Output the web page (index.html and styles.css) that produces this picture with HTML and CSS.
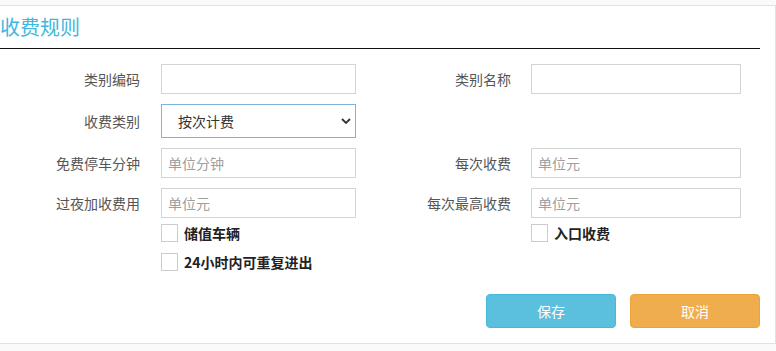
FILE: index.html
```html
<!DOCTYPE html>
<html lang="zh-CN">

<head>
  <meta charset="UTF-8" />
  <meta name="viewport" content="width=device-width, initial-scale=1.0" />
  <title>收费规则</title>
  <link rel="stylesheet" href="styles.css">
</head>

<body>
  <div class="panel">
    <div class="panel-heading">
      <h3 class="panel-title">收费规则</h3>
    </div>

    <form class="rule-form">
      <div class="form-grid">
        <label class="field-label" for="typeCode">类别编码</label>
        <input class="field-input" id="typeCode" type="text" />
        <label class="field-label" for="typeName">类别名称</label>
        <input class="field-input" id="typeName" type="text" />

        <label class="field-label" for="feeType">收费类别</label>
        <select class="field-select" id="feeType">
          <option>按次计费</option>
          <option>按时计费</option>
        </select>
        <span></span>
        <span></span>

        <label class="field-label" for="freeMinutes">免费停车分钟</label>
        <input class="field-input" id="freeMinutes" type="text" placeholder="单位分钟" />
        <label class="field-label" for="perFee">每次收费</label>
        <input class="field-input" id="perFee" type="text" placeholder="单位元" />

        <label class="field-label" for="nightFee">过夜加收费用</label>
        <input class="field-input" id="nightFee" type="text" placeholder="单位元" />
        <label class="field-label" for="maxFee">每次最高收费</label>
        <input class="field-input" id="maxFee" type="text" placeholder="单位元" />

        <span></span>
        <label class="check"><input type="checkbox" /> 储值车辆</label>
        <span></span>
        <label class="check"><input type="checkbox" /> 入口收费</label>

        <span></span>
        <label class="check check-last"><input type="checkbox" /> 24小时内可重复进出</label>
        <span></span>
        <span></span>
      </div>

      <div class="form-actions">
        <button type="button" class="btn btn-info">保存</button>
        <button type="button" class="btn btn-warning">取消</button>
      </div>
    </form>
  </div>
</body>

</html>
```

FILE: styles.css
```css
:root {
  --info: #5bc0de;
  --info-border: #46b8da;
  --warning: #f0ad4e;
  --warning-border: #eea236;
  --border: #d4d4d4;
  --label: #555;
}

body {
  margin: 0;
  font-family: "Microsoft YaHei", "Noto Sans CJK SC", "Noto Sans", sans-serif;
  font-size: 14px;
  color: #333;
  background-color: #fafafa;
}

.panel {
  margin-top: 5px;
  width: 775px;
  background: #fff;
  border: 1px solid #e2e2e2;
  border-left: none;
}

.panel-heading {
  margin-right: 15px;
  border-bottom: 1px solid #111;
}

.panel-title {
  margin: 0;
  height: 42px;
  line-height: 42px;
  font-size: 20px;
  font-weight: normal;
  color: #3fb7dd;
}

.rule-form {
  padding: 15px 0 15px;
}

.form-grid {
  display: grid;
  grid-template-columns: 161px 195px 175px 210px;
  row-gap: 10px;
  align-items: center;
}

.field-label {
  padding-right: 21px;
  text-align: right;
  color: var(--label);
}

.form-grid .field-label:nth-child(4n+3) {
  padding-right: 20px;
}

.field-input {
  box-sizing: border-box;
  height: 30px;
  width: 100%;
  margin: 0;
  padding: 0 6px;
  border: 1px solid var(--border);
  border-radius: 0;
  font-family: inherit;
  font-size: 14px;
  color: #333;
}

.field-input::placeholder {
  color: #a0a0a0;
}

.field-select {
  box-sizing: border-box;
  height: 34px;
  width: 100%;
  margin: 0;
  padding: 0 16px;
  border: 1px solid #7fb3d8;
  border-radius: 0;
  background: #fff url("data:image/svg+xml,%3Csvg xmlns='http://www.w3.org/2000/svg' width='10' height='6' viewBox='0 0 10 6'%3E%3Cpath d='M1 1l4 4 4-4' fill='none' stroke='%23333' stroke-width='1.8'/%3E%3C/svg%3E") no-repeat right 4px center;
  appearance: none;
  -webkit-appearance: none;
  font-family: inherit;
  font-size: 14px;
  color: #333;
}

.check {
  display: flex;
  align-items: center;
  gap: 6px;
  height: 22px;
  margin-top: -6px;
  font-weight: 700;
  color: #222;
}

.check-last {
  margin-top: -3px;
}

.check input {
  appearance: none;
  -webkit-appearance: none;
  box-sizing: border-box;
  width: 17px;
  height: 18px;
  margin: 0;
  border: 1px solid #ccc;
  background: #fff;
}

.form-actions {
  display: flex;
  justify-content: flex-end;
  gap: 14px;
  margin: 21px 15px 0 0;
}

.btn {
  width: 130px;
  height: 34px;
  border-radius: 4px;
  border: 1px solid transparent;
  font-family: inherit;
  font-size: 14px;
  color: #fff;
  cursor: pointer;
}

.btn-info {
  background-color: var(--info);
  border-color: var(--info-border);
}

.btn-warning {
  background-color: var(--warning);
  border-color: var(--warning-border);
}
```
